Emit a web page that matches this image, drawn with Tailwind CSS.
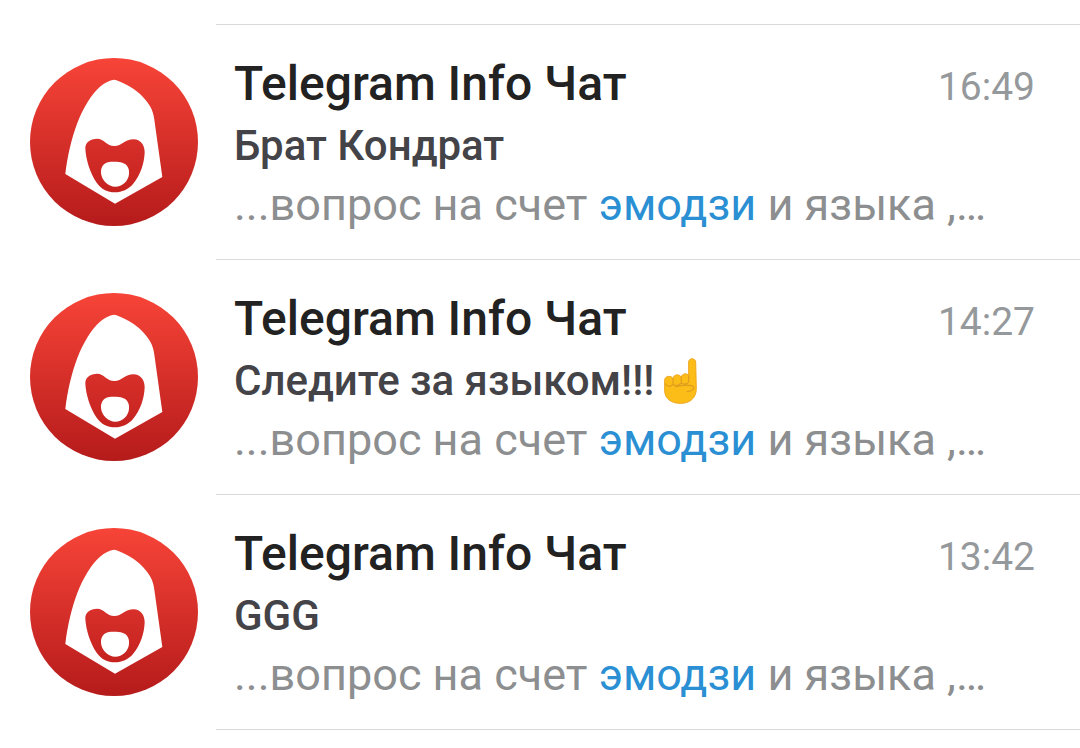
<!DOCTYPE html>
<html lang="ru">
<head>
<meta charset="utf-8">
<meta name="viewport" content="width=device-width, initial-scale=1">
<title>Telegram Info Чат</title>
<script src="https://cdn.jsdelivr.net/npm/@tailwindcss/browser@4"></script>
</head>
<body class="bg-white font-['Roboto',sans-serif]">
<svg class="size-0" aria-hidden="true">
  <defs>
    <linearGradient id="red" x1="0" y1="0" x2="0" y2="1">
      <stop offset="0" stop-color="#f74438"/>
      <stop offset="1" stop-color="#b51b1b"/>
    </linearGradient>
    <linearGradient id="mouth" x1="0" y1="0" x2="0" y2="1">
      <stop offset="0" stop-color="#d8302b"/>
      <stop offset="1" stop-color="#c5221f"/>
    </linearGradient>
    <symbol id="avatar" viewBox="30 30 504 504">
      <circle cx="282" cy="282" r="252" fill="url(#red)"/>
      <path fill="#fff" d="M282 95C300 98 338 117 360 138C385 162 400 184 403 215L427 387L285 467L136 378C142 325 155 270 172 225C190 178 215 138 240 116C254 104 269 96 282 95Z"/>
      <path fill="url(#mouth)" d="M232 272C252 272 260 294 283 294C306 294 315 274 341 274C361 275 374 290 374 313C373 345 362 381 339 408C325 424 306 433 285 433C262 433 244 424 230 404C210 374 198 336 196 302C195 283 211 272 232 272Z"/>
      <path fill="#fff" d="M264 343C275 341 296 341 307 344C322 348 329 362 327 378C325 400 307 416 286 416C264 416 245 397 243 375C242 358 251 346 264 343Z"/>
    </symbol>
  </defs>
</svg>

<main>
  <div class="ml-[216px] h-[25px] border-b border-[#d9d9d9]"></div>

  <article class="flex">
    <svg class="mt-[33px] mr-[18px] ml-[30px] size-[168px] shrink-0" role="img" aria-label="Telegram Info Чат"><use href="#avatar"/></svg>
    <div class="min-w-0 grow border-b border-[#d9d9d9] pt-[29px] pr-[45px] pb-[27px] pl-[18px]">
      <div class="flex items-baseline justify-between">
        <h2 class="text-[48px] leading-[60px] font-medium text-[#222222]">Telegram Info Чат</h2>
        <time class="text-[39px] leading-[48px] text-[#95999c]">16:49</time>
      </div>
      <p class="text-[42px] leading-[64px] font-medium text-[#434348]">Брат Кондрат</p>
      <p class="truncate text-[45px] leading-[54px] text-[#8c8e90]">...вопрос на счет <span class="text-[#2b8fd3]">эмодзи</span> и языка ,…</p>
    </div>
  </article>

  <article class="flex">
    <svg class="mt-[33px] mr-[18px] ml-[30px] size-[168px] shrink-0" role="img" aria-label="Telegram Info Чат"><use href="#avatar"/></svg>
    <div class="min-w-0 grow border-b border-[#d9d9d9] pt-[29px] pr-[45px] pb-[27px] pl-[18px]">
      <div class="flex items-baseline justify-between">
        <h2 class="text-[48px] leading-[60px] font-medium text-[#222222]">Telegram Info Чат</h2>
        <time class="text-[39px] leading-[48px] text-[#95999c]">14:27</time>
      </div>
      <p class="flex items-center text-[42px] leading-[64px] font-medium text-[#434348]">Следите за языком!!!
        <svg class="ml-2 h-12 w-9" viewBox="20 18 108 150" role="img" aria-label="☝">
          <path fill="#fdbd18" stroke="#eda51f" stroke-width="3" stroke-linejoin="round" d="M101 78V34C101 20 123 20 123 34L125 116C125 146 106 163 76 163C46 163 27 148 26 124V90C27 76 48 75 52 86C53 71 74 70 78 82C79 68 99 67 101 78Z"/>
          <path fill="none" stroke="#e0a01f" stroke-width="4" stroke-linecap="round" stroke-linejoin="round" d="M52 86V102M78 82V98M28 102C32 112 47 112 52 103C57 110 73 108 78 99C84 104 97 104 101 96V78M60 111C74 106 106 104 115 110C121 117 111 126 96 126"/>
        </svg>
      </p>
      <p class="truncate text-[45px] leading-[54px] text-[#8c8e90]">...вопрос на счет <span class="text-[#2b8fd3]">эмодзи</span> и языка ,…</p>
    </div>
  </article>

  <article class="flex">
    <svg class="mt-[33px] mr-[18px] ml-[30px] size-[168px] shrink-0" role="img" aria-label="Telegram Info Чат"><use href="#avatar"/></svg>
    <div class="min-w-0 grow border-b border-[#d9d9d9] pt-[29px] pr-[45px] pb-[27px] pl-[18px]">
      <div class="flex items-baseline justify-between">
        <h2 class="text-[48px] leading-[60px] font-medium text-[#222222]">Telegram Info Чат</h2>
        <time class="text-[39px] leading-[48px] text-[#95999c]">13:42</time>
      </div>
      <p class="text-[42px] leading-[64px] font-medium text-[#434348]">GGG</p>
      <p class="truncate text-[45px] leading-[54px] text-[#8c8e90]">...вопрос на счет <span class="text-[#2b8fd3]">эмодзи</span> и языка ,…</p>
    </div>
  </article>
</main>
</body>
</html>
